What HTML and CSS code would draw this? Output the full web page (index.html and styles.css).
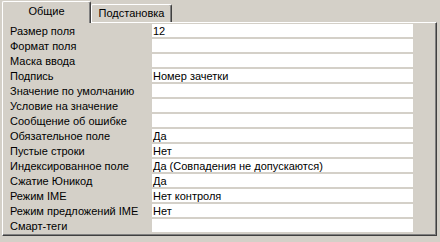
FILE: index.html
```html
<!DOCTYPE html>
<html>
<head>
    <title>Свойства поля</title>
    <link rel="stylesheet" href="styles.css">
</head>
<body>
    <div class="tabs">
        <div class="tab active">Общие</div>
        <div class="tab">Подстановка</div>
    </div>
    <div class="panel">
        <div class="props">
            <div class="label">Размер поля</div><div class="value">12</div>
            <div class="label">Формат поля</div><div class="value"></div>
            <div class="label">Маска ввода</div><div class="value"></div>
            <div class="label">Подпись</div><div class="value">Номер зачетки</div>
            <div class="label">Значение по умолчанию</div><div class="value"></div>
            <div class="label">Условие на значение</div><div class="value"></div>
            <div class="label">Сообщение об ошибке</div><div class="value"></div>
            <div class="label">Обязательное поле</div><div class="value">Да</div>
            <div class="label">Пустые строки</div><div class="value">Нет</div>
            <div class="label">Индексированное поле</div><div class="value">Да (Совпадения не допускаются)</div>
            <div class="label">Сжатие Юникод</div><div class="value">Да</div>
            <div class="label">Режим IME</div><div class="value">Нет контроля</div>
            <div class="label">Режим предложений IME</div><div class="value">Нет</div>
            <div class="label">Смарт-теги</div><div class="value"></div>
        </div>
    </div>
</body>
</html>
```

FILE: styles.css
```css
body {
    margin: 0;
    background-color: #d4d0c8;
    font-family: "Liberation Sans", Arial, sans-serif;
    font-size: 11px;
    color: #000;
}
.tabs {
    display: flex;
    align-items: flex-end;
    height: 21px;
    padding: 1px 0 0 2px;
}
.tab {
    box-sizing: border-box;
    width: 81px;
    height: 18px;
    padding-top: 2px;
    line-height: 13px;
    text-align: center;
    border-top: 1px solid #fff;
    border-left: 1px solid #fff;
    border-right: 1px solid #404040;
    box-shadow: inset -1px 0 #808080;
    border-radius: 2px 2px 0 0;
}
.tab.active {
    position: relative;
    z-index: 1;
    width: 89px;
    height: 22px;
    margin-bottom: -1px;
    padding-top: 3px;
    background-color: #d4d0c8;
}
.panel {
    box-sizing: border-box;
    width: 435px;
    height: 214px;
    margin-left: 2px;
    border-style: solid;
    border-width: 1px;
    border-color: #fff #404040 #404040 #fff;
    box-shadow: inset -1px -1px #808080;
}
.props {
    display: grid;
    grid-template-columns: 149px 261px;
    grid-auto-rows: 13px;
    row-gap: 2px;
    padding-top: 1px;
}
.label {
    padding: 1px 0 0 7px;
    line-height: 13px;
    white-space: nowrap;
}
.value {
    padding: 1px 0 0 1px;
    line-height: 13px;
    background-color: #fff;
    white-space: nowrap;
    overflow: hidden;
}
```
